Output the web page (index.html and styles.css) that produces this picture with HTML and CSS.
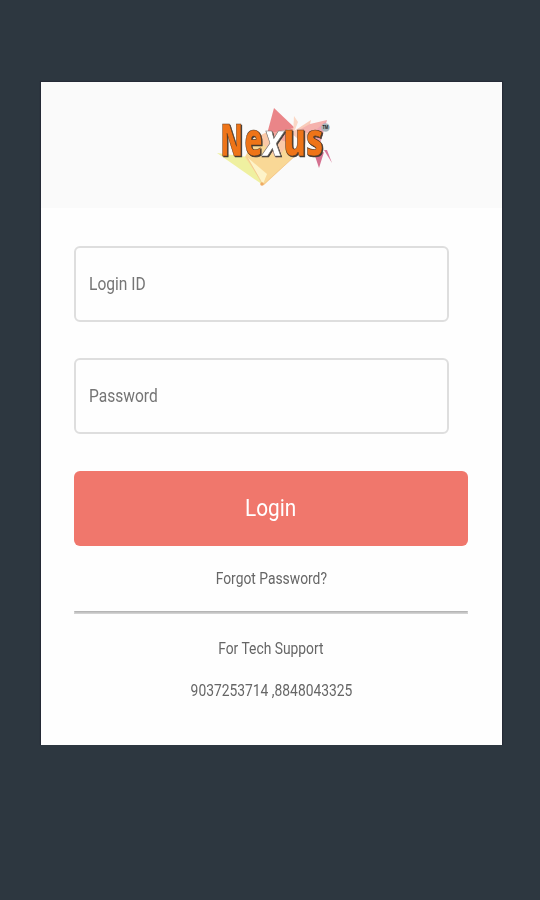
FILE: index.html
```html
<!doctype html>
<html lang="en">
	<head>
		<title>Nexus Login</title>
		<meta charset="utf-8">
		<meta name="viewport" content="width=device-width">
		<link rel="stylesheet" href="styles.css">
	</head>
	<body>
		<main class="card">
			<header class="card-header">
				<svg class="logo" width="120" height="86" viewBox="0 0 120 86" role="img" aria-label="Nexus">
					<!-- shards -->
					<polygon points="0,51 31,55 46,83" fill="#eff0a0"/>
					<polygon points="28,55 47,83 78,54 60,34 38,36" fill="#f9d896"/>
					<polygon points="30,55 46,82 50,72" fill="#fdf3c8"/>
					<polygon points="40,35 58,26 72,41 60,57" fill="#fac9a8"/>
					<polygon points="57,6 50,32 78,26" fill="#ea8588"/>
					<polygon points="50,32 78,26 74,42" fill="#f3a49c"/>
					<polygon points="74,31 94,18 88,43" fill="#f9cbb9"/>
					<polygon points="77,14 81,20 76,33" fill="#fbd8c6"/>
					<polygon points="80,29 93,22 110,18 101,33" fill="#f5b2ad"/>
					<polygon points="90,36 110,18 103,42" fill="#eda3ae"/>
					<polygon points="98,54 107,50 102,66" fill="#d4708f"/>
					<polygon points="107,48 110,48 115,61" fill="#d8789a"/>
					<polyline points="30,55 46,83 78,54" fill="none" stroke="#f2bd83" stroke-width=".6"/>
					<circle cx="45" cy="82" r="1.8" fill="#efab62"/>
					<!-- wordmark -->
					<g class="word">
						<text x="3.5" y="53.5" font-size="45" textLength="22.5" lengthAdjust="spacingAndGlyphs">N</text>
						<text x="27.5" y="53.5" font-size="46" textLength="18" lengthAdjust="spacingAndGlyphs">e</text>
						<text x="66.5" y="53.5" font-size="46" textLength="40" lengthAdjust="spacingAndGlyphs">us</text>
						<text x="46" y="53.5" font-size="45" textLength="20" lengthAdjust="spacingAndGlyphs" class="slant">x</text>
					</g>
					<!-- trademark -->
					<circle cx="108.5" cy="25.5" r="4.3" fill="#a9b8be"/>
					<text x="105.5" y="27" class="tm" textLength="6" lengthAdjust="spacingAndGlyphs">TM</text>
				</svg>
			</header>
			<form class="login">
				<label class="field"><span class="narrow">Login ID</span></label>
				<label class="field"><span class="narrow">Password</span></label>
				<button type="button" class="submit"><span class="narrow">Login</span></button>
				<a class="line forgot"><span class="narrow">Forgot Password?</span></a>
				<hr>
				<p class="line support"><span class="narrow">For Tech Support</span></p>
				<p class="line phones"><span class="narrow">9037253714 ,8848043325</span></p>
			</form>
		</main>
	</body>
</html>
```

FILE: styles.css
```css
html, body {
	margin: 0;
	padding: 0;
}
html {
	height: 100%;
	background: #2d3740;
}
body {
	font-family: Roboto, sans-serif;
	color: #666;
}
* {
	box-sizing: border-box;
}
.card {
	width: 461px;
	height: 663px;
	margin: 82px 0 0 41px;
	background: #fefefe;
	box-shadow: 0 0 1px 1px #252a36;
}
.card-header {
	height: 126px;
	padding: 20px 0 0 176px;
	background: #fafafa;
}
.logo {
	display: block;
}
.word {
	font-family: "Open Sans", sans-serif;
	font-weight: 800;
	fill: #ee7418;
	stroke: #5b3d25;
	stroke-width: .7;
	filter: drop-shadow(1px 1px 0 #3f3a36);
}
.word .slant {
	font-style: italic;
	font-weight: bold;
	fill: #fff;
	stroke: #77716c;
}
.tm {
	font-family: "Open Sans", sans-serif;
	font-weight: bold;
	font-size: 5px;
	fill: #222;
}
.login {
	display: flex;
	flex-direction: column;
	padding: 38px 34px 0 33px;
}
.field {
	display: flex;
	align-items: center;
	width: 375px;
	height: 76px;
	margin-bottom: 36px;
	padding: 0 13px 1px;
	border: 2px solid #dedede;
	border-radius: 6px;
	color: #757575;
	font-size: 18px;
}
/* squeezed lettering */
.narrow {
	display: inline-block;
	transform: scaleX(.865);
	white-space: nowrap;
}
.field .narrow {
	transform-origin: left;
}
.submit {
	height: 75px;
	margin: 1px 0 0;
	padding: 0 0 2px;
	border: 0;
	border-radius: 6px;
	background: #f0776c;
	color: #fff;
	font: 24px Roboto, sans-serif;
}
.line {
	margin: 0;
	font-size: 16px;
	line-height: 20px;
	text-align: center;
}
.forgot {
	margin-top: 23px;
}
hr {
	width: 100%;
	height: 3px;
	margin: 22px 0 25px;
	border: 1px solid #d2d2d2;
	border-top-color: #b5b5b5;
	background: #c4c4c4;
}
.phones {
	margin-top: 22px;
}
```
